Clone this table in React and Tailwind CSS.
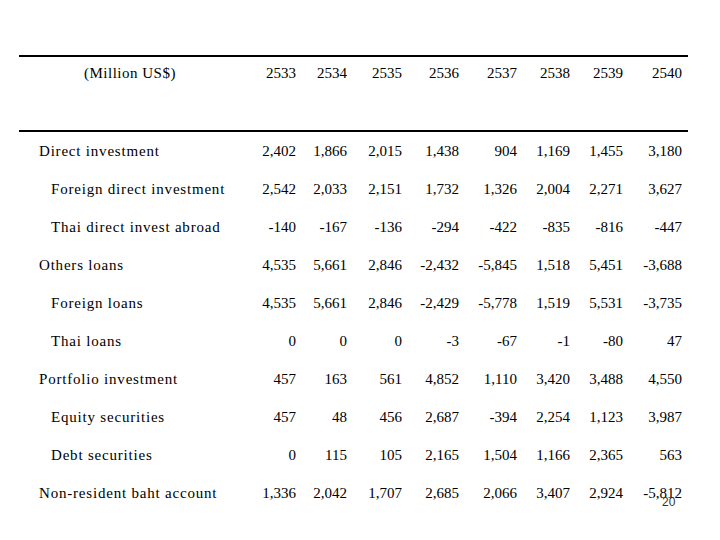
import React from "react";

const years = ["2533", "2534", "2535", "2536", "2537", "2538", "2539", "2540"];

const rows = [
  { label: "Direct investment", indent: false, v: ["2,402", "1,866", "2,015", "1,438", "904", "1,169", "1,455", "3,180"] },
  { label: "Foreign direct investment", indent: true, v: ["2,542", "2,033", "2,151", "1,732", "1,326", "2,004", "2,271", "3,627"] },
  { label: "Thai direct invest abroad", indent: true, v: ["-140", "-167", "-136", "-294", "-422", "-835", "-816", "-447"] },
  { label: "Others loans", indent: false, v: ["4,535", "5,661", "2,846", "-2,432", "-5,845", "1,518", "5,451", "-3,688"] },
  { label: "Foreign loans", indent: true, v: ["4,535", "5,661", "2,846", "-2,429", "-5,778", "1,519", "5,531", "-3,735"] },
  { label: "Thai loans", indent: true, v: ["0", "0", "0", "-3", "-67", "-1", "-80", "47"] },
  { label: "Portfolio investment", indent: false, v: ["457", "163", "561", "4,852", "1,110", "3,420", "3,488", "4,550"] },
  { label: "Equity securities", indent: true, v: ["457", "48", "456", "2,687", "-394", "2,254", "1,123", "3,987"] },
  { label: "Debt securities", indent: true, v: ["0", "115", "105", "2,165", "1,504", "1,166", "2,365", "563"] },
  { label: "Non-resident baht account", indent: false, v: ["1,336", "2,042", "1,707", "2,685", "2,066", "3,407", "2,924", "-5,812"] },
];

const cols = "grid grid-cols-[222px_55px_51px_55px_57px_58px_53px_53px_59px]";

export default function App() {
  return (
    <div className="relative w-[720px] h-[540px] bg-white text-black overflow-hidden" style={{ fontFamily: '"Liberation Serif", "Times New Roman", serif' }}>
      <div className="pt-[55px] pl-[19px]">
        <div className="w-[669px] pr-[6px] border-t-2 border-b-2 border-black">
          <div className={`${cols} h-[73px] items-start pt-[6px] text-[15px] leading-[20px]`}>
            <div className="text-center tracking-[0.5px]">(Million US$)</div>
            {years.map((y) => (
              <div key={y} className="text-right">{y}</div>
            ))}
          </div>
        </div>
        <div className="w-[669px] pr-[6px]">
          {rows.map((r) => (
            <div key={r.label} className={`${cols} h-[38px] items-center text-[15px] leading-[20px]`}>
              <div className={`${r.indent ? "pl-[32px]" : "pl-[20px]"} tracking-[0.8px] whitespace-nowrap`}>{r.label}</div>
              {r.v.map((x, i) => (
                <div key={i} className="text-right">{x}</div>
              ))}
            </div>
          ))}
        </div>
      </div>
      <div className="absolute left-[662px] top-[495px] text-[12px] leading-[14px] text-[#333]" style={{ fontFamily: '"Liberation Sans", Arial, sans-serif' }}>20</div>
    </div>
  );
}
